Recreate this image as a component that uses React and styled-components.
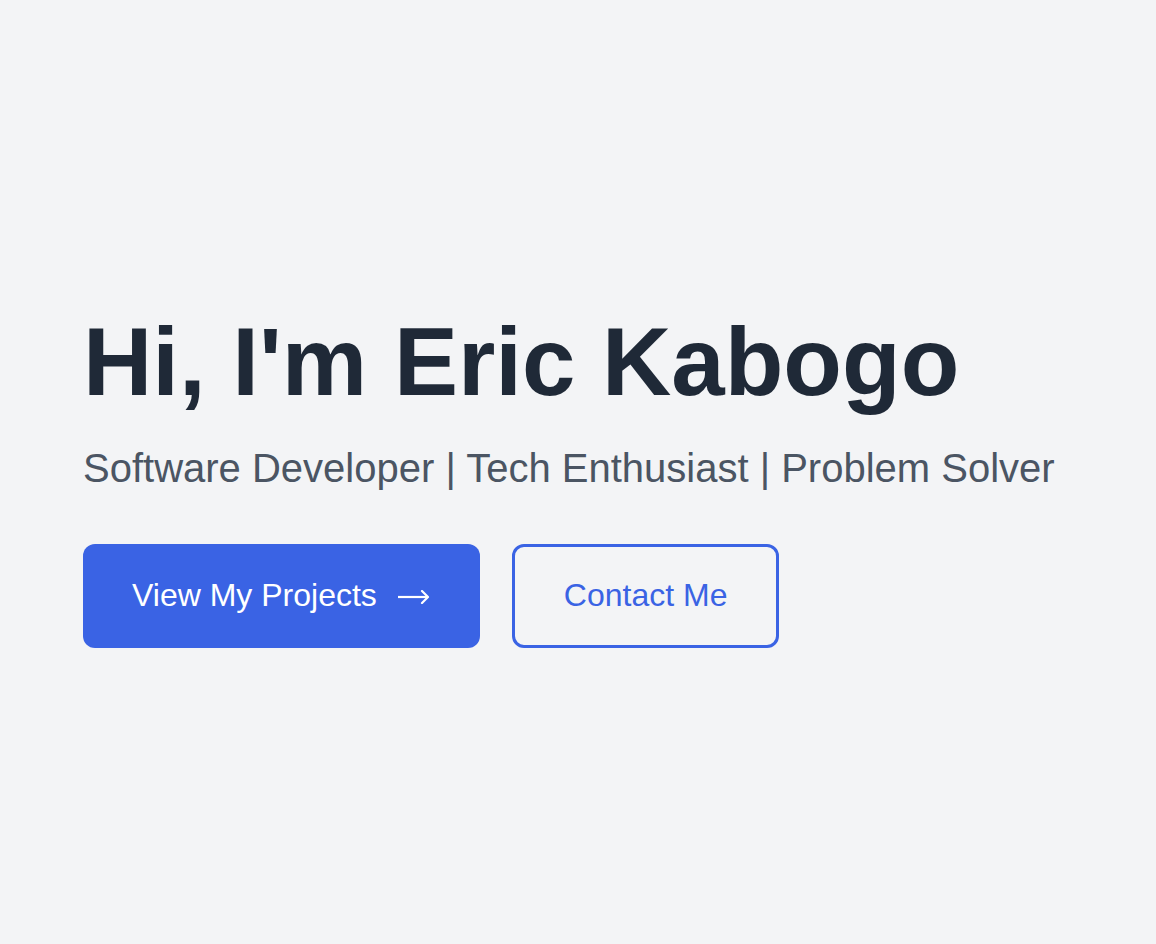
import React from "react";
import styled, { createGlobalStyle } from "styled-components";

const GlobalStyle = createGlobalStyle`
  html, body {
    margin: 0;
    padding: 0;
    background: #f3f4f6;
  }
  body {
    font-family: "Liberation Sans", Arial, sans-serif;
  }
`;

const Hero = styled.section`
  min-height: 944px;
  box-sizing: border-box;
  display: flex;
  flex-direction: column;
  justify-content: center;
  padding: 8px 83px 0;
`;

const Title = styled.h1`
  margin: 0;
  font-size: 96px;
  font-weight: 700;
  line-height: 1.2;
  color: #1f2937;
`;

const Tagline = styled.p`
  margin: 20px 0 0;
  font-size: 40px;
  line-height: 1.4;
  color: #4b5563;
`;

const Actions = styled.div`
  display: flex;
  gap: 32px;
  margin-top: 48px;
`;

const Button = styled.a`
  display: inline-flex;
  align-items: center;
  gap: 20px;
  box-sizing: border-box;
  height: 104px;
  border-radius: 12px;
  font-size: 32px;
  text-decoration: none;
  cursor: pointer;
  padding: ${(p) => (p.$primary ? "0 50px 0 49px" : "0 49px")};
  border: ${(p) => (p.$primary ? "none" : "3px solid #3a63e4")};
  background: ${(p) => (p.$primary ? "#3a63e4" : "transparent")};
  color: ${(p) => (p.$primary ? "#ffffff" : "#3a63e4")};
`;

const Arrow = styled.svg`
  width: 33px;
  height: 14px;
  flex-shrink: 0;
  margin-top: 2px;
`;

const ArrowRight = () => (
  <Arrow viewBox="0 0 33 14" fill="none" stroke="currentColor" strokeWidth="2.2">
    <path d="M1 7H31" />
    <path d="M25 1L31 7L25 13" strokeLinecap="round" strokeLinejoin="round" />
  </Arrow>
);

export default function App() {
  return (
    <>
      <GlobalStyle />
      <Hero>
        <Title>Hi, I'm Eric Kabogo</Title>
        <Tagline>Software Developer | Tech Enthusiast | Problem Solver</Tagline>
        <Actions>
          <Button $primary>
            <span>View My Projects</span>
            <ArrowRight />
          </Button>
          <Button>Contact Me</Button>
        </Actions>
      </Hero>
    </>
  );
}
